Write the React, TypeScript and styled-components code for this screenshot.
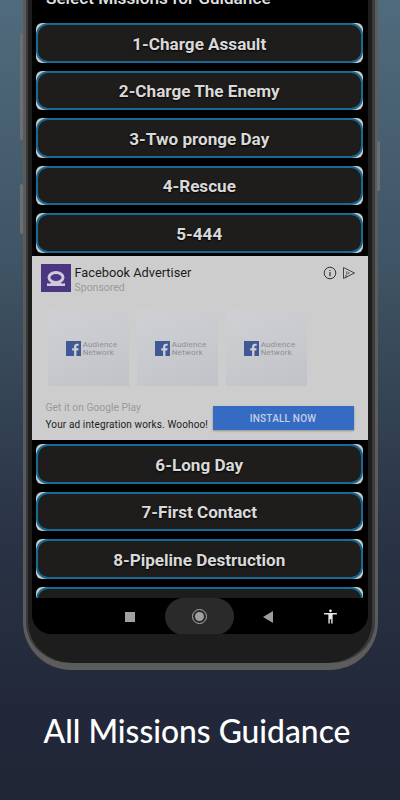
import { createGlobalStyle, styled } from "styled-components";

const Reset = createGlobalStyle`
  html, body {
    margin: 0;
    padding: 0;
  }
  body {
    font-family: Roboto, "Liberation Sans", sans-serif;
    background: #232a3b;
  }
`;

const Page = styled.div`
  width: 400px;
  height: 800px;
  overflow: hidden;
  display: flex;
  flex-direction: column;
  align-items: center;
  background: linear-gradient(180deg, #506b7d 0%, #3f5464 33%, #2a3446 66%, #222839 88%, #202636 100%);
`;

const Phone = styled.div`
  position: relative;
  box-sizing: border-box;
  flex: none;
  width: 355px;
  height: 670px;
  padding: 0 7px 29px 6px;
  background: #1d1d1d;
  border-style: solid;
  border-color: #5c5c5c;
  border-width: 0 3px 7px 3px;
  border-radius: 0 0 48px 48px;
  box-shadow: inset 2px 0 0 #3a3a3a, inset -3px 0 0 #3a3a3a;
`;

const SideKey = styled.div<{ $side: "left" | "right"; $top: number; $height: number }>`
  position: absolute;
  top: ${(p) => p.$top}px;
  height: ${(p) => p.$height}px;
  width: 3px;
  ${(p) => p.$side}: ${(p) => (p.$side === "left" ? -6 : -5)}px;
  background: #6a6f73;
  border-radius: 2px;
`;

const Screen = styled.div`
  width: 336px;
  height: 634px;
  background: #000;
  border-radius: 0 0 20px 20px;
  overflow: hidden;
  display: flex;
  flex-direction: column;
`;

const List = styled.div`
  flex: none;
  height: 598px;
  overflow: hidden;
`;

const Title = styled.div`
  margin: -12px 0 15.3px 14.5px;
  height: 20px;
  line-height: 20px;
  font-size: 17.2px;
  font-weight: 500;
  color: #e4e4e4;
  white-space: nowrap;
`;

const Missions = styled.div`
  display: flex;
  flex-direction: column;
  gap: 8px;
  padding: 0 4.5px 0 4px;
`;

const CORNER = "#c9c9c9";

const MissionFrame = styled.div`
  flex: none;
  height: 39.5px;
  border-radius: 6px;
  background:
    linear-gradient(${CORNER}, ${CORNER}) left top / 12px 12px no-repeat,
    linear-gradient(${CORNER}, ${CORNER}) right top / 12px 12px no-repeat,
    linear-gradient(${CORNER}, ${CORNER}) left bottom / 12px 12px no-repeat,
    linear-gradient(${CORNER}, ${CORNER}) right bottom / 12px 12px no-repeat;
`;

const Mission = styled.div`
  box-sizing: border-box;
  height: 39.5px;
  padding-top: 1px;
  display: flex;
  align-items: center;
  justify-content: center;
  background: #1e1d1c;
  border: 2px solid #176a96;
  border-radius: 12px;
  color: #d9d9d9;
  font-size: 17.1px;
  font-weight: 700;
  text-shadow: 0 1px 2px #000;
  white-space: nowrap;
`;

const Ad = styled.div`
  box-sizing: border-box;
  flex: none;
  height: 184px;
  margin: -4.8px -4.5px -3.7px -4px;
  padding: 8px 12px 0 9px;
  background: #cdcdcd;
  display: flex;
  flex-direction: column;
`;

const AdHeader = styled.div`
  display: flex;
  align-items: flex-start;
  gap: 4px;
  height: 47px;
`;

const AdLogo = styled.svg`
  flex: none;
  width: 30px;
  height: 28px;
  display: block;
`;

const AdHeading = styled.div`
  flex: 1;
  display: flex;
  flex-direction: column;
`;

const Advertiser = styled.div`
  font-size: 12.8px;
  line-height: 17px;
  color: #1c1c1c;
`;

const Sponsored = styled.div`
  font-size: 10.5px;
  line-height: 14px;
  color: #9a9a9a;
`;

const AdActions = styled.div`
  display: flex;
  align-items: center;
  gap: 5px;
  margin-top: 2px;
`;

const ActionIcon = styled.svg`
  width: 14px;
  height: 14px;
  display: block;
`;

const Thumbs = styled.div`
  display: flex;
  gap: 8px;
  padding-left: 7px;
`;

const Thumb = styled.div`
  box-sizing: border-box;
  width: 81px;
  height: 75px;
  padding-left: 7px;
  display: flex;
  align-items: center;
  justify-content: center;
  gap: 2px;
  background: linear-gradient(160deg, #cfd0d3 0%, #c9cace 50%, #c0c2c8 100%);
`;

const FbLogo = styled.svg`
  width: 15px;
  height: 15px;
  display: block;
  flex: none;
`;

const Network = styled.div`
  font-size: 8px;
  line-height: 8px;
  letter-spacing: 0.2px;
  color: #8e8f93;
`;

const AdFooter = styled.div`
  display: flex;
  align-items: flex-end;
  justify-content: space-between;
  margin: 15px 2px 0 0;
  padding-left: 5px;
`;

const AdCopy = styled.div`
  display: flex;
  flex-direction: column;
  gap: 4px;
  margin-bottom: -1px;
`;

const StoreLine = styled.div`
  font-size: 10.3px;
  line-height: 13px;
  color: #9a9a9a;
`;

const Blurb = styled.div`
  font-size: 10px;
  line-height: 13px;
  letter-spacing: 0.13px;
  color: #1c1c1c;
  white-space: nowrap;
`;

const Install = styled.div`
  width: 141px;
  height: 24px;
  display: flex;
  align-items: center;
  justify-content: center;
  background: #356bc3;
  color: #c3cfe2;
  font-size: 10px;
  font-weight: 500;
  letter-spacing: 0.2px;
  box-shadow: 0 1px 2px rgba(0, 0, 0, 0.3);
`;

const NavBar = styled.div`
  flex: none;
  height: 36px;
  display: grid;
  grid-template-columns: 133px 69px 69px 1fr;
  align-items: center;
  background: #000;
`;

const NavCell = styled.div<{ $pad: number }>`
  display: flex;
  align-items: center;
  justify-content: flex-end;
  padding-right: ${(p) => p.$pad}px;
`;

const Square = styled.div`
  width: 10px;
  height: 10px;
  margin-top: 1px;
  background: #a0a0a0;
`;

const HomePill = styled.div`
  height: 37px;
  display: flex;
  align-items: center;
  justify-content: center;
  background: #2a2a2a;
  border-radius: 19px;
`;

const HomeRing = styled.div`
  box-sizing: border-box;
  width: 15px;
  height: 15px;
  padding: 2px;
  border: 1px solid #a8a8a8;
  border-radius: 50%;
  &::after {
    content: "";
    display: block;
    width: 100%;
    height: 100%;
    background: #a0a0a0;
    border-radius: 50%;
  }
`;

const Back = styled.div`
  width: 0;
  height: 0;
  border-style: solid;
  border-width: 6px 10px 6px 0;
  border-color: transparent #9c9c9c transparent transparent;
`;

const Person = styled.svg`
  width: 17px;
  height: 17px;
  display: block;
  fill: #e6e6e6;
`;

const Caption = styled.div`
  flex: 1;
  box-sizing: border-box;
  width: 100%;
  display: flex;
  align-items: flex-start;
  justify-content: center;
  padding: 41px 6px 0 0;
  color: #fff;
  font-family: Lato, "Open Sans", sans-serif;
  font-size: 31.8px;
  font-weight: 500;
  line-height: 40px;
  white-space: nowrap;
`;

const Fb = () => (
  <FbLogo viewBox="0 0 15 15">
    <rect width="15" height="15" fill="#3f5996" />
    <path d="M10.4 15V9.4h1.9l.3-2.2h-2.2V5.8c0-.6.2-1 1.1-1h1.2V2.8c-.2 0-.9-.1-1.7-.1-1.7 0-2.9 1-2.9 2.9v1.6H6.2v2.2h1.9V15z" fill="#cfd0d3" />
  </FbLogo>
);

const first = ["1-Charge Assault", "2-Charge The Enemy", "3-Two pronge Day", "4-Rescue", "5-444"];
const second = ["6-Long Day", "7-First Contact", "8-Pipeline Destruction", ""];

const Row = ({ label }: { label: string }) => (
  <MissionFrame>
    <Mission>{label}</Mission>
  </MissionFrame>
);

export default function App() {
  return (
    <Page>
      <Reset />
      <Phone>
        <SideKey $side="left" $top={33} $height={107} />
        <SideKey $side="left" $top={184} $height={50} />
        <SideKey $side="right" $top={141} $height={50} />
        <Screen>
          <List>
            <Title>Select Missions for Guidance</Title>
            <Missions>
              {first.map((m) => (
                <Row key={m} label={m} />
              ))}
              <Ad>
                <AdHeader>
                  <AdLogo viewBox="0 0 30 28">
                    <rect width="30" height="28" fill="#4b3682" />
                    <ellipse cx="15" cy="13.500" rx="7" ry="5" fill="none" stroke="#cfc9dd" strokeWidth="3" />
                    <path d="M6 19c2 1 3 .5 4 0h10c1 .5 2 1 4 0v3H6z" fill="#cfc9dd" />
                  </AdLogo>
                  <AdHeading>
                    <Advertiser>Facebook Advertiser</Advertiser>
                    <Sponsored>Sponsored</Sponsored>
                  </AdHeading>
                  <AdActions>
                    <ActionIcon viewBox="0 0 14 14">
                      <circle cx="7" cy="7" r="5.800" fill="none" stroke="#333" strokeWidth="1" />
                      <path d="M7 6v4.200M7 3.900v1" stroke="#333" strokeWidth="1.200" />
                    </ActionIcon>
                    <ActionIcon viewBox="0 0 14 14">
                      <path d="M1.500 1.500v11l11-5.500z M4 12V9" fill="none" stroke="#444" strokeWidth="1" />
                      <path d="M4.500 5.500v3l3-1.500z" fill="none" stroke="#666" strokeWidth="0.8" />
                    </ActionIcon>
                  </AdActions>
                </AdHeader>
                <Thumbs>
                  {[1, 2, 3].map((n) => (
                    <Thumb key={n}>
                      <Fb />
                      <Network>
                        Audience
                        <br />
                        Network
                      </Network>
                    </Thumb>
                  ))}
                </Thumbs>
                <AdFooter>
                  <AdCopy>
                    <StoreLine>Get it on Google Play</StoreLine>
                    <Blurb>Your ad integration works. Woohoo!</Blurb>
                  </AdCopy>
                  <Install>INSTALL NOW</Install>
                </AdFooter>
              </Ad>
              {second.map((m) => (
                <Row key={m || "next"} label={m} />
              ))}
            </Missions>
          </List>
          <NavBar>
            <NavCell $pad={30}>
              <Square />
            </NavCell>
            <HomePill>
              <HomeRing />
            </HomePill>
            <NavCell $pad={30}>
              <Back />
            </NavCell>
            <NavCell $pad={29}>
              <Person viewBox="0 0 24 24">
                <path d="M12 2c1.100 0 2 .9 2 2s-.9 2-2 2-2-.9-2-2 .9-2 2-2zm9 7h-6v13h-2v-6h-2v6H9V9H3V7h18v2z" />
              </Person>
            </NavCell>
          </NavBar>
        </Screen>
      </Phone>
      <Caption>All Missions Guidance</Caption>
    </Page>
  );
}
